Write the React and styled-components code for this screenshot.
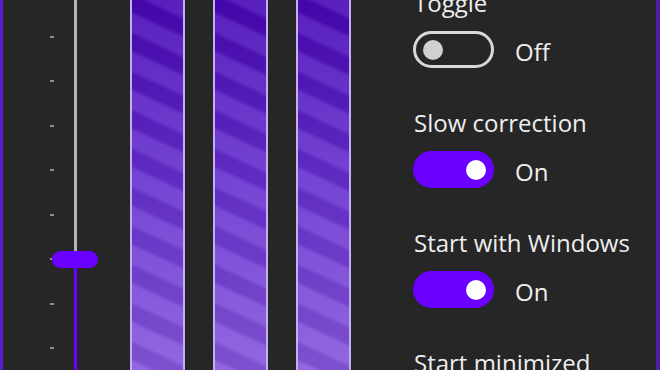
import React from "react";
import styled, { createGlobalStyle } from "styled-components";

const Global = createGlobalStyle`
  html, body {
    margin: 0;
    padding: 0;
    background: #262626;
  }
  body {
    font-family: "Open Sans", "Noto Sans", sans-serif;
  }
`;

const Window = styled.div`
  width: 660px;
  height: 370px;
  box-sizing: border-box;
  display: flex;
  overflow: hidden;
  background: #262626;
  border-left: 3px solid #5a1cd0;
  border-right: 4px solid #4e1fa8;
`;

const SliderBlock = styled.div`
  position: relative;
  width: 127px;
  flex-shrink: 0;
  display: flex;
  padding-left: 47px;
  box-sizing: border-box;
  gap: 20px;
`;

const Ticks = styled.div`
  width: 4px;
  height: 349px;
  padding-top: 36px;
  box-sizing: border-box;
  display: flex;
  flex-direction: column;
  justify-content: space-between;
`;

const Tick = styled.span`
  display: block;
  width: 4px;
  height: 2px;
  background: #8e8e8e;
`;

const Track = styled.div`
  width: 3px;
  height: 370px;
  background: linear-gradient(
    180deg,
    #b4b4b4 0,
    #b4b4b4 258px,
    #6a00ff 258px,
    #6a00ff 100%
  );
`;

const Thumb = styled.div`
  position: absolute;
  left: 49px;
  top: 251px;
  width: 46px;
  height: 17px;
  border-radius: 9px;
  background: #6a00ff;
`;

const Bars = styled.div`
  display: flex;
  gap: 28px;
  flex-shrink: 0;
`;

const Bar = styled.div`
  width: 55px;
  height: 370px;
  box-sizing: border-box;
  border-left: 2px solid #c2aef0;
  border-right: 2px solid #c2aef0;
  background:
    repeating-linear-gradient(
      205deg,
      rgba(255, 255, 255, 0.1) 0,
      rgba(255, 255, 255, 0.1) 14px,
      rgba(0, 0, 0, 0.06) 19px,
      rgba(0, 0, 0, 0.06) 31px,
      rgba(255, 255, 255, 0.1) 35px
    ),
    linear-gradient(180deg, #4606b4 0%, #6630cf 50%, #8656dc 100%);
`;

const Settings = styled.div`
  margin-left: 62px;
  margin-top: -12px;
  display: flex;
  flex-direction: column;
`;

const Setting = styled.div`
  display: flex;
  flex-direction: column;
  gap: 13px;
  margin-bottom: 40px;
`;

const Label = styled.div`
  font-size: 24px;
  line-height: 30px;
  color: #eeeeee;
  padding-left: 1px;
  white-space: nowrap;
`;

const ToggleRow = styled.div`
  display: flex;
  align-items: center;
  gap: 21px;
  height: 37px;
`;

const Switch = styled.div`
  position: relative;
  width: 81px;
  height: 37px;
  box-sizing: border-box;
  border-radius: 19px;
  border: 3px solid ${(p) => (p.$on ? "#6a00ff" : "#d8d8d8")};
  background: ${(p) => (p.$on ? "#6a00ff" : "transparent")};
`;

const Knob = styled.span`
  position: absolute;
  top: 6px;
  left: ${(p) => (p.$on ? "50px" : "7px")};
  width: 20px;
  height: 20px;
  border-radius: 50%;
  background: ${(p) => (p.$on ? "#ffffff" : "#d0d0d0")};
`;

const State = styled.span`
  font-size: 24px;
  margin-top: 4px;
  color: #eeeeee;
`;

const settings = [
  { label: "Toggle", on: false },
  { label: "Slow correction", on: true },
  { label: "Start with Windows", on: true },
  { label: "Start minimized", on: false },
];

export default function App() {
  return (
    <>
      <Global />
      <Window>
        <SliderBlock>
          <Ticks>
            {Array.from({ length: 8 }).map((_, i) => (
              <Tick key={i} />
            ))}
          </Ticks>
          <Track />
          <Thumb />
        </SliderBlock>
        <Bars>
          <Bar />
          <Bar />
          <Bar />
        </Bars>
        <Settings>
          {settings.map((s) => (
            <Setting key={s.label}>
              <Label>{s.label}</Label>
              <ToggleRow>
                <Switch $on={s.on}>
                  <Knob $on={s.on} />
                </Switch>
                <State>{s.on ? "On" : "Off"}</State>
              </ToggleRow>
            </Setting>
          ))}
        </Settings>
      </Window>
    </>
  );
}
